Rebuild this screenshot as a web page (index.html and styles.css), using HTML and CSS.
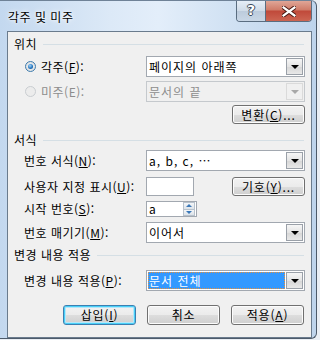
FILE: index.html
```html
<!DOCTYPE html>
<html lang="ko">
<head>
    <meta charset="UTF-8">
    <title>각주 및 미주</title>
    <link rel="stylesheet" href="styles.css">
</head>
<body>
    <div class="window">
        <div class="titlebar">
            <span class="title">각주 및 미주</span>
            <div class="caption-btns">
                <span class="cap-help">?</span>
                <span class="cap-close">
                    <svg width="14" height="11" viewBox="0 0 14 11">
                        <path d="M1.5 1.5 L12.5 9.5 M12.5 1.5 L1.5 9.5" stroke="#4a1a14" stroke-width="4.2" stroke-linecap="square"/>
                        <path d="M1.5 1.5 L12.5 9.5 M12.5 1.5 L1.5 9.5" stroke="#fff" stroke-width="2.2" stroke-linecap="square"/>
                    </svg>
                </span>
            </div>
        </div>

        <div class="client">
            <div class="group-head"><span>위치</span></div>

            <div class="row h21 mt5">
                <div class="radio-label"><span class="radio checked"></span>각주(<u>F</u>):</div>
                <div class="combo">
                    <span class="combo-text">페이지의 아래쪽</span>
                    <span class="combo-btn"><i class="tri"></i></span>
                </div>
            </div>

            <div class="row h21 mt4">
                <div class="radio-label disabled"><span class="radio"></span>미주(E):</div>
                <div class="combo disabled">
                    <span class="combo-text">문서의 끝</span>
                    <span class="combo-btn"><i class="tri"></i></span>
                </div>
            </div>

            <div class="row h19 mt3">
                <div></div>
                <div class="right">
                    <button class="btn">변환(<u>C</u>)...</button>
                </div>
            </div>

            <div class="group-head mt9"><span>서식</span></div>

            <div class="row h21 mt3">
                <div class="label">번호 서식(<u>N</u>):</div>
                <div class="combo">
                    <span class="combo-text">a, b, c, …</span>
                    <span class="combo-btn"><i class="tri"></i></span>
                </div>
            </div>

            <div class="row h19 mt6">
                <div class="label">사용자 지정 표시(<u>U</u>):</div>
                <div class="split">
                    <span class="textbox"></span>
                    <button class="btn">기호(<u>Y</u>)...</button>
                </div>
            </div>

            <div class="row h16 mt5">
                <div class="label">시작 번호(<u>S</u>):</div>
                <div>
                    <div class="spin">
                        <span class="spin-text">a</span>
                        <span class="spin-btns">
                            <span class="spin-up"><i></i></span>
                            <span class="spin-down"><i></i></span>
                        </span>
                    </div>
                </div>
            </div>

            <div class="row h21 mt5">
                <div class="label">번호 매기기(<u>M</u>):</div>
                <div class="combo">
                    <span class="combo-text">이어서</span>
                    <span class="combo-btn"><i class="tri"></i></span>
                </div>
            </div>

            <div class="group-head mt5"><span>변경 내용 적용</span></div>

            <div class="row h20 mt8">
                <div class="label">변경 내용 적용(<u>P</u>):</div>
                <div class="combo">
                    <span class="combo-text selected">문서 전체</span>
                    <span class="combo-btn"><i class="tri"></i></span>
                </div>
            </div>

            <div class="actions">
                <button class="btn default">삽입(<u>I</u>)</button>
                <button class="btn">취소</button>
                <button class="btn">적용(<u>A</u>)</button>
            </div>
        </div>
    </div>
</body>
</html>
```

FILE: styles.css
```css
/* Word footnote dialog, Windows 7 look */

body {
    margin: 0;
    padding: 0;
    background-color: #e9eef4;
    font-family: "Noto Sans CJK KR", "Noto Sans", sans-serif;
    font-size: 12px;
    letter-spacing: 0.5px;
    color: #000;
}

.window {
    width: 312px;
    height: 337px;
    padding: 0 4px 0 0;
    border-top: 1px solid #6f8297;
    border-right: 1px solid #4c5a6a;
    border-bottom: 1px solid #4c5a6a;
    border-bottom-right-radius: 6px;
    border-top-right-radius: 6px;
    background: linear-gradient(to right, #c3d8ef 0%, #dce9f7 35%, #e3eefa 50%, #cfe0f2 75%, #bed4ec 100%);
    display: flex;
    flex-direction: column;
}

.titlebar {
    height: 30px;
    display: flex;
    justify-content: space-between;
    align-items: flex-start;
}

.title {
    margin: 9px 0 0 8px;
    line-height: 14px;
    text-shadow: 0 0 6px #fff, 0 0 3px #fff;
}

.caption-btns {
    display: flex;
    border: 1px solid #5a6d80;
    border-top: none;
    border-radius: 0 0 4px 4px;
    overflow: hidden;
    height: 20px;
}

.cap-help {
    width: 28px;
    border-right: 1px solid #5a6d80;
    background: linear-gradient(#e6eef7, #cfdbe8 50%, #bccbdc 51%, #c9d7e6);
    color: #fff;
    font-family: "DejaVu Sans", sans-serif;
    font-weight: bold;
    font-size: 14px;
    letter-spacing: 0;
    line-height: 19px;
    text-align: center;
    text-shadow: -1px 0 #3b4a5a, 1px 0 #3b4a5a, 0 -1px #3b4a5a, 0 1px #3b4a5a;
}

.cap-close {
    width: 45px;
    background: linear-gradient(#e0a697, #cf7b68 45%, #c0493a 50%, #cc6552);
    display: flex;
    align-items: center;
    justify-content: center;
}

.client {
    margin-left: 7px;
    height: 300px;
    border: 1px solid #6a7b8d;
    background-color: #f0f0f0;
    padding-top: 5px;
    box-sizing: content-box;
}

.group-head {
    height: 14px;
    display: flex;
    align-items: center;
    padding: 0 7px 0 6px;
    line-height: 14px;
}

.group-head::after {
    content: "";
    flex: 1;
    height: 1px;
    margin-left: 6px;
    background-color: #d5dfe5;
}

.row {
    display: grid;
    grid-template-columns: 122px 159px;
    padding-left: 16px;
    align-items: center;
}

.h16 { height: 16px; }
.h19 { height: 19px; }
.h20 { height: 20px; }
.h21 { height: 21px; }
.mt3 { margin-top: 3px; }
.mt4 { margin-top: 4px; }
.mt5 { margin-top: 5px; }
.mt6 { margin-top: 6px; }
.mt8 { margin-top: 8px; }
.mt9 { margin-top: 9px; }

.label,
.radio-label {
    white-space: nowrap;
    line-height: 14px;
}

.radio-label {
    display: flex;
    align-items: center;
}

.radio-label.disabled {
    color: #8d8d8d;
}

.radio {
    width: 11px;
    height: 11px;
    border-radius: 50%;
    border: 1px solid #8f9aa5;
    background: radial-gradient(circle, #f4f4f4, #d6d9dc);
    margin: 0 5px 0 1px;
    box-sizing: border-box;
    display: inline-flex;
    align-items: center;
    justify-content: center;
}

.radio.checked {
    border-color: #3d7bad;
}

.radio.checked::after {
    content: "";
    width: 5px;
    height: 5px;
    border-radius: 50%;
    background: radial-gradient(circle at 40% 35%, #9fd6ff, #1f6fb8 60%, #0f4d8e);
}

.radio-label.disabled .radio {
    border-color: #c9cdd1;
    background: #ececec;
}

.combo {
    height: 100%;
    border: 1px solid #a2a8b0;
    background-color: #fff;
    box-sizing: border-box;
    display: flex;
    align-items: stretch;
    padding: 1px;
}

.combo-text {
    flex: 1;
    padding-left: 1px;
    line-height: 17px;
    letter-spacing: 1px;
    white-space: nowrap;
    overflow: hidden;
}

.combo-text.selected {
    background-color: #3399ff;
    color: #fff;
    outline: 1px dotted #e8913c;
    outline-offset: -1px;
    margin-right: 1px;
}

.combo-btn {
    width: 15px;
    border: 1px solid #9aa0a8;
    background: linear-gradient(#f6f6f6, #e4e4e4 50%, #d6d6d6 51%, #e8e8e8);
    display: flex;
    align-items: center;
    justify-content: center;
}

.tri {
    width: 0;
    height: 0;
    border-left: 4px solid transparent;
    border-right: 4px solid transparent;
    border-top: 4px solid #000;
}

.combo.disabled {
    background-color: #f0f0f0;
    border-color: #c5c9cd;
    color: #8d8d8d;
}

.combo.disabled .combo-btn {
    border-color: #dadada;
    background: #f0f0f0;
}

.combo.disabled .tri {
    border-top-color: #a8a8a8;
}

.right {
    display: flex;
    justify-content: flex-end;
    height: 100%;
}

.split {
    display: flex;
    justify-content: space-between;
    height: 100%;
}

.textbox {
    width: 48px;
    height: 19px;
    border: 1px solid #a2a8b0;
    background-color: #fff;
    box-sizing: border-box;
}

.btn {
    width: 73px;
    height: 19px;
    padding: 0;
    border: 1px solid #707070;
    border-radius: 3px;
    background: linear-gradient(#f2f2f2, #ebebeb 50%, #dddddd 51%, #cfcfcf);
    box-shadow: inset 0 0 0 1px #fcfcfc;
    font-family: inherit;
    font-size: 12px;
    letter-spacing: 0.8px;
    line-height: 16px;
    color: #000;
}

.btn.default {
    border-color: #3c7fb1;
    box-shadow: inset 0 0 0 1px #48d0f8, inset 0 0 0 2px #b6e6f9;
}

.spin {
    width: 51px;
    height: 16px;
    border: 1px solid #a2a8b0;
    background-color: #fff;
    box-sizing: border-box;
    display: flex;
}

.spin-text {
    flex: 1;
    padding-left: 2px;
    line-height: 14px;
}

.spin-btns {
    width: 12px;
    margin: 0 1px 0 0;
    display: flex;
    flex-direction: column;
}

.spin-up,
.spin-down {
    flex: 1;
    border: 1px solid #b8c2cc;
    background: linear-gradient(#f4f6f8, #dde3e9);
    display: flex;
    align-items: center;
    justify-content: center;
}

.spin-down {
    border-top: none;
}

.spin-up i {
    border-left: 3px solid transparent;
    border-right: 3px solid transparent;
    border-bottom: 3px solid #3a78b8;
}

.spin-down i {
    border-left: 3px solid transparent;
    border-right: 3px solid transparent;
    border-top: 3px solid #3a78b8;
}

.actions {
    display: flex;
    justify-content: flex-end;
    gap: 11px;
    padding-right: 7px;
    margin-top: 15px;
}

.actions .btn {
    height: 20px;
}

u {
    text-decoration: underline;
    text-underline-offset: 1px;
}
```
